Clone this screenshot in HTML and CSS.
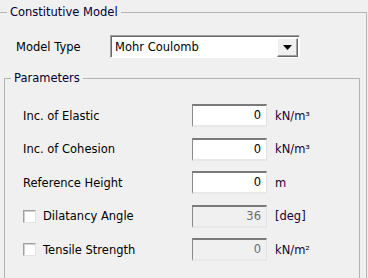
FILE: index.html
```html
<!DOCTYPE html>
<html lang="en">
<head>
    <meta charset="UTF-8">
    <title>Constitutive Model</title>
    <link rel="stylesheet" href="styles.css">
</head>
<body>
    <fieldset class="group outer">
        <legend>Constitutive Model</legend>

        <div class="model-row">
            <span class="model-label">Model Type</span>
            <div class="combo">
                <span class="combo-value">Mohr Coulomb</span>
                <span class="combo-btn">
                    <svg width="9" height="5" viewBox="0 0 9 5"><path d="M0 0H9L4.5 5Z" fill="#000"/></svg>
                </span>
            </div>
        </div>

        <fieldset class="group params">
            <legend>Parameters</legend>

            <div class="param-row">
                <span class="param-label">Inc. of Elastic</span>
                <div class="field">0</div>
                <span class="unit">kN/m³</span>
            </div>
            <div class="param-row">
                <span class="param-label">Inc. of Cohesion</span>
                <div class="field">0</div>
                <span class="unit">kN/m³</span>
            </div>
            <div class="param-row">
                <span class="param-label">Reference Height</span>
                <div class="field">0</div>
                <span class="unit">m</span>
            </div>
            <div class="param-row">
                <label class="param-label check"><span class="box"></span>Dilatancy Angle</label>
                <div class="field disabled">36</div>
                <span class="unit">[deg]</span>
            </div>
            <div class="param-row">
                <label class="param-label check"><span class="box"></span>Tensile Strength</label>
                <div class="field disabled">0</div>
                <span class="unit">kN/m²</span>
            </div>
        </fieldset>
    </fieldset>
</body>
</html>
```

FILE: styles.css
```css
* {
    box-sizing: border-box;
}

body {
    margin: 0;
    background: #f0f0f0;
    color: #000;
    font-family: 'DejaVu Sans', sans-serif;
    font-size: 11.5px;
    height: 278px;
    overflow: hidden;
}

.group {
    border: 1px solid #b4b4b4;
    padding: 0;
    min-width: 0;
}

.group legend {
    padding: 0 3px;
    height: 16px;
    line-height: 16px;
    color: #000033;
}

.outer {
    margin: 4px 0 0 -2px;
    width: 369px;
    height: 290px;
}

.outer > legend {
    margin-left: 8px;
}

.model-row {
    display: flex;
    align-items: center;
    margin-top: 15px;
    padding-left: 17px;
}

.model-label {
    width: 94px;
}

.combo {
    display: flex;
    align-items: center;
    width: 190px;
    height: 23px;
    background: #fff;
    border-top: 1px solid #a0a0a0;
    border-left: 1px solid #a0a0a0;
    border-right: 1px solid #fff;
    border-bottom: 1px solid #fff;
    box-shadow: inset 1px 1px 0 #696969;
    padding: 2px 1px 1px 4px;
}

.combo-value {
    flex: 1;
}

.combo-btn {
    width: 21px;
    height: 19px;
    display: flex;
    align-items: center;
    justify-content: center;
    background: #f0f0f0;
    border: 1px solid #fff;
    border-right-color: #696969;
    border-bottom-color: #696969;
    box-shadow: inset -1px -1px 0 #a0a0a0;
}

.params {
    margin: 12px 0 0 5px;
    width: 356px;
    height: 220px;
    padding: 18px 0 0 18px;
}

.params > legend {
    margin-left: -12px;
}

.param-row {
    display: flex;
    align-items: center;
    height: 23px;
    margin-bottom: 10.5px;
}

.param-label {
    width: 169px;
}

.check {
    display: flex;
    align-items: center;
    gap: 7px;
}

.box {
    width: 13px;
    height: 13px;
    background: #fff;
    border-top: 1px solid #a0a0a0;
    border-left: 1px solid #a0a0a0;
    border-right: 1px solid #e3e3e3;
    border-bottom: 1px solid #e3e3e3;
    box-shadow: inset 1px 1px 0 #d0d0d0;
}

.field {
    width: 75px;
    height: 23px;
    line-height: 19px;
    text-align: right;
    padding-right: 5px;
    background: #fff;
    border-top: 2px solid #7a7a7a;
    border-left: 1px solid #8a8a8a;
    border-right: 1px solid #e3e3e3;
    border-bottom: 2px solid #e8e8e8;
}

.field.disabled {
    background: #f0f0f0;
    color: #6d6d6d;
}

.unit {
    margin-left: 8px;
    color: #1a0033;
}
```
